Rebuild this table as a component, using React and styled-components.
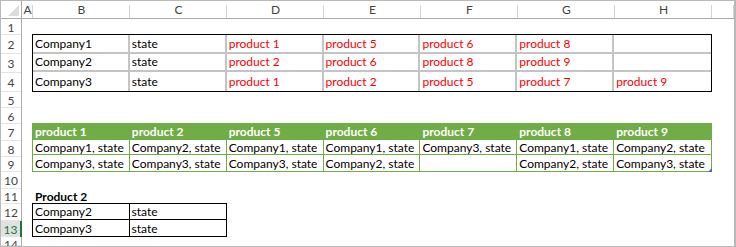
import styled, { createGlobalStyle } from "styled-components";

const GlobalStyle = createGlobalStyle`
  html, body {
    margin: 0;
    padding: 0;
    background: #fff;
  }
  body {
    font-family: Lato, "Open Sans", "Liberation Sans", sans-serif;
  }
`;

const COLS = ["A", "B", "C", "D", "E", "F", "G", "H", ""];
const ROW_HEIGHTS = [16, 19, 19, 19, 16, 16, 17, 16, 15, 17, 15, 17, 16, 9];

const Frame = styled.div`
  width: 736px;
  height: 247px;
  box-sizing: border-box;
  border: 1px solid #b9b9b9;
  border-right-width: 2px;
  overflow: hidden;
  background: #fff;
`;

const Sheet = styled.div`
  display: grid;
  grid-template-columns: 21px 11px repeat(7, 97px) 1fr;
  grid-template-rows: 18px ${ROW_HEIGHTS.map((h) => h + "px").join(" ")};
  font-size: 12px;
  color: #000;
`;

const Corner = styled.div`
  grid-row: 1;
  grid-column: 1;
  border-right: 1px solid #ababab;
  border-bottom: 1px solid #ababab;
  display: flex;
  align-items: flex-end;
  justify-content: flex-end;
  padding: 0 2px 2px 0;
`;

const ColHead = styled.div`
  grid-row: 1;
  border-bottom: 1px solid #ababab;
  display: flex;
  align-items: center;
  justify-content: center;
  color: #444;
  font-size: 12px;
  position: relative;
  &::after {
    content: "";
    position: absolute;
    right: 0;
    top: 4px;
    bottom: 0;
    width: 1px;
    background: #d4d4d4;
  }
`;

const RowHead = styled.div`
  grid-column: 1;
  border-right: 1px solid ${(p) => (p.$active ? "#217346" : "#ababab")};
  border-right-width: ${(p) => (p.$active ? "2px" : "1px")};
  background: ${(p) => (p.$active ? "#e1e1e1" : "#fff")};
  color: ${(p) => (p.$active ? "#217346" : "#444")};
  display: flex;
  align-items: ${(p) => (p.$clipped ? "flex-start" : "center")};
  justify-content: center;
  font-size: 12px;
  line-height: 15px;
  overflow: hidden;
  box-shadow: inset 0 -1px 0 #e4e4e4;
`;

const Table = styled.div`
  grid-column: ${(p) => p.$cols};
  grid-row: ${(p) => p.$rows};
  display: grid;
  grid-template-columns: ${(p) => p.$template};
  grid-auto-rows: 1fr;
  box-sizing: border-box;
  border: 1px solid ${(p) => p.$line};
  margin: -1px 0 0 -1px;
  width: calc(100% + 1px);
  position: relative;
`;

const Cell = styled.div`
  display: flex;
  align-items: center;
  padding-left: 2px;
  white-space: nowrap;
  overflow: hidden;
  box-sizing: border-box;
  color: ${(p) => p.$color || "#000"};
  font-weight: ${(p) => (p.$bold ? 700 : 400)};
  background: ${(p) => p.$fill || "transparent"};
  border-right: ${(p) => (p.$last ? "none" : p.$vline || "none")};
  border-bottom: ${(p) => (p.$bottom ? "none" : p.$hline || "none")};
`;

const Title = styled.div`
  grid-column: 3 / 6;
  grid-row: 12;
  display: flex;
  align-items: center;
  padding-left: 2px;
  font-weight: 700;
`;

const Handle = styled.span`
  position: absolute;
  right: -1px;
  bottom: -1px;
  width: 0;
  height: 0;
  border-left: 4px solid transparent;
  border-bottom: 4px solid #4a64c4;
`;

const topRows = [
  ["Company1", "state", "product 1", "product 5", "product 6", "product 8", ""],
  ["Company2", "state", "product 2", "product 6", "product 8", "product 9", ""],
  ["Company3", "state", "product 1", "product 2", "product 5", "product 7", "product 9"],
];

const greenHead = ["product 1", "product 2", "product 5", "product 6", "product 7", "product 8", "product 9"];
const greenRows = [
  ["Company1, state", "Company2, state", "Company1, state", "Company1, state", "Company3, state", "Company1, state", "Company2, state"],
  ["Company3, state", "Company3, state", "Company3, state", "Company2, state", "", "Company2, state", "Company3, state"],
];

const product2 = [
  ["Company2", "state"],
  ["Company3", "state"],
];

const GREEN = "#70ad47";

export default function App() {
  return (
    <>
      <GlobalStyle />
      <Frame>
        <Sheet>
          <Corner>
            <svg width="11" height="11" viewBox="0 0 11 11">
              <polygon points="11,0 11,11 0,11" fill="#dcdcdc" />
            </svg>
          </Corner>
          {COLS.map((c, i) => (
            <ColHead key={i} style={{ gridColumn: i + 2 }}>
              {c}
            </ColHead>
          ))}
          {ROW_HEIGHTS.map((_, i) => (
            <RowHead
              key={i}
              style={{ gridRow: i + 2 }}
              $active={i + 1 === 13}
              $clipped={i === ROW_HEIGHTS.length - 1}
            >
              {i + 1}
            </RowHead>
          ))}

          <Table $cols="3 / 10" $rows="3 / 6" $line="#000" $template="repeat(7, 1fr)">
            {topRows.map((row, r) =>
              row.map((v, c) => (
                <Cell
                  key={r + "-" + c}
                  $color={c > 1 ? "#ff0000" : "#000"}
                  $vline="2px solid #c4c4c4"
                  $hline="2px solid #c4c4c4"
                  $last={c === 6}
                  $bottom={r === 2}
                >
                  {v}
                </Cell>
              ))
            )}
          </Table>

          <Table $cols="3 / 10" $rows="8 / 11" $line={GREEN} $template="repeat(7, 1fr)">
            {greenHead.map((v, c) => (
              <Cell key={"h" + c} $bold $color="#fff" $fill={GREEN}>
                {v}
              </Cell>
            ))}
            {greenRows.map((row, r) =>
              row.map((v, c) => (
                <Cell
                  key={r + "-" + c}
                  $vline={`1px solid ${GREEN}`}
                  $hline={`1px solid ${GREEN}`}
                  $last={c === 6}
                  $bottom={r === 1}
                >
                  {v}
                </Cell>
              ))
            )}
            <Handle />
          </Table>

          <Title>Product 2</Title>
          <Table $cols="3 / 5" $rows="13 / 15" $line="#000" $template="repeat(2, 1fr)">
            {product2.map((row, r) =>
              row.map((v, c) => (
                <Cell
                  key={r + "-" + c}
                  $vline="1px solid #000"
                  $hline="1px solid #000"
                  $last={c === 1}
                  $bottom={r === 1}
                >
                  {v}
                </Cell>
              ))
            )}
          </Table>
        </Sheet>
      </Frame>
    </>
  );
}
